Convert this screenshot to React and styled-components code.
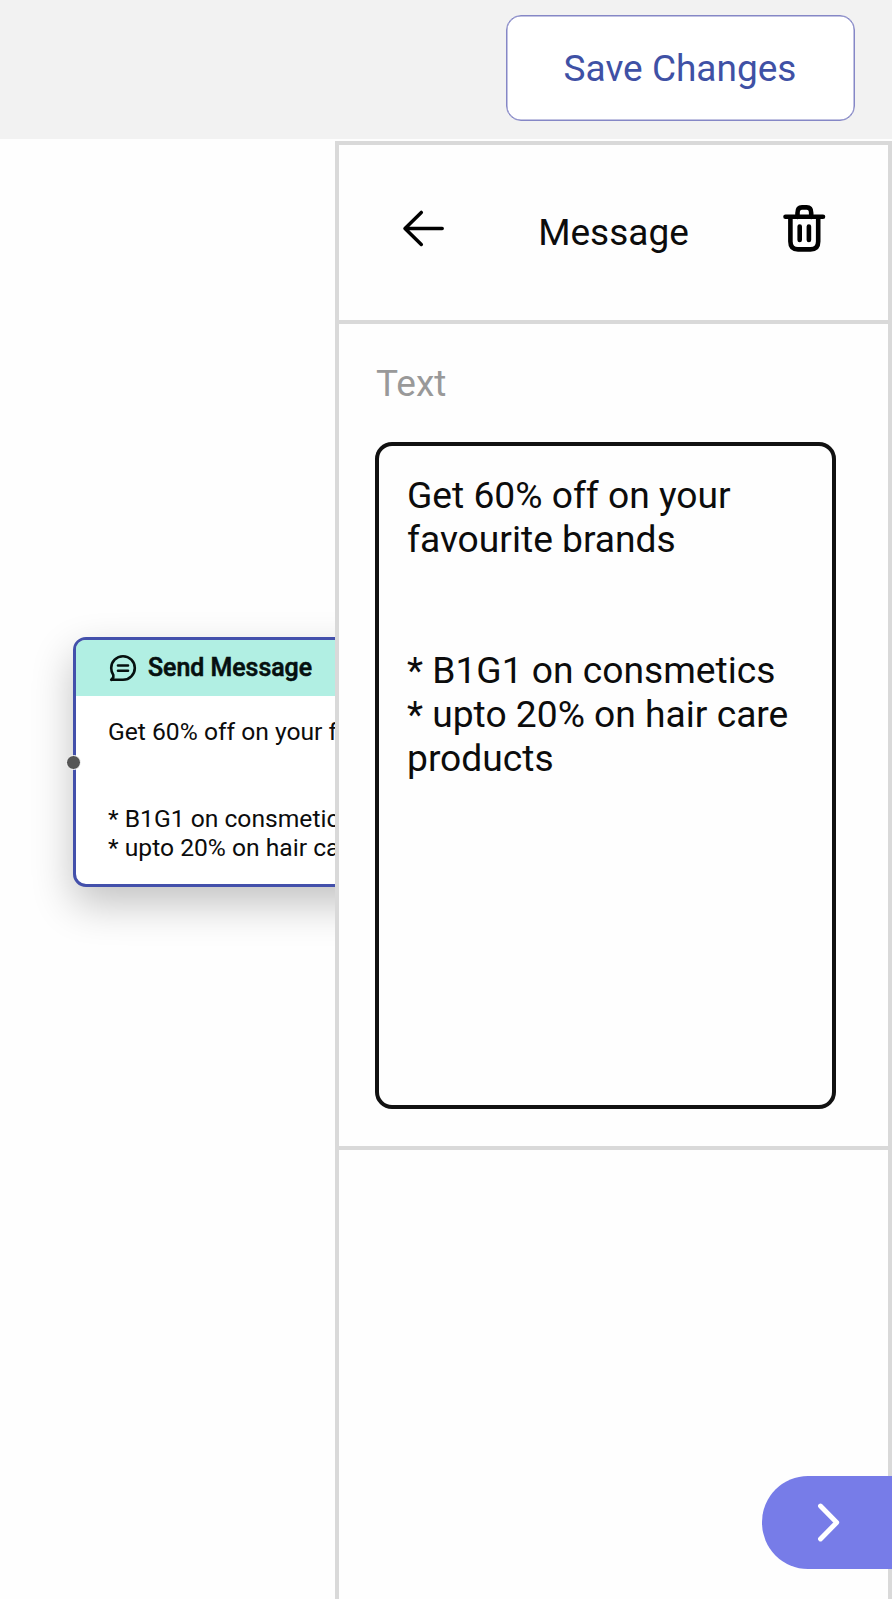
import React from "react";
import styled, { createGlobalStyle } from "styled-components";

const GlobalStyle = createGlobalStyle`
  *, *::before, *::after { box-sizing: border-box; }
  body { margin: 0; background: #fefefe; font-family: Roboto, sans-serif; color: #0c0c0c; overflow: hidden; }
  button { font: inherit; padding: 0; cursor: pointer; }
`;

const line = "#d9d9d9";

const Page = styled.div`
  display: flex;
  flex-direction: column;
  height: 1599px;
  width: 892px;
  overflow: hidden;
  position: relative;
`;

const TopBar = styled.header`
  display: flex;
  justify-content: flex-end;
  flex: none;
  height: 139px;
  padding: 15px 37px 0 0;
  background: #f2f2f2;
`;

const SaveButton = styled.button`
  width: 349px;
  height: 106px;
  padding: 1px 1px 0 0;
  border: 1px solid #8587c6;
  border-radius: 15px;
  box-shadow: inset 0 0 0 0.5px #8587c6;
  background: #fff;
  color: #3f51a5;
  font-size: 37px;
`;

const Workspace = styled.main`
  display: flex;
  flex: 1;
  min-height: 0;
`;

const Canvas = styled.section`
  position: relative;
  flex: 1;
  overflow: hidden;
`;

const Node = styled.article`
  position: absolute;
  left: 73px;
  top: 498px;
  width: 520px;
  height: 250px;
  border: 3px solid #4350ab;
  border-radius: 13px;
  background: #fff;
  box-shadow: 0 17px 42px rgba(0, 0, 0, 0.24);
`;

const NodeHeader = styled.header`
  display: flex;
  align-items: center;
  gap: 11px;
  height: 56px;
  padding-left: 33px;
  border-radius: 9px 9px 0 0;
  background: #b1efe3;
  color: #06100f;
`;

const NodeTitle = styled.h2`
  margin: 0;
  font-size: 24.9px;
  line-height: 28px;
  font-weight: 500;
  -webkit-text-stroke: 0.6px currentColor;
`;

const NodeText = styled.p`
  margin: 0;
  padding: 22px 0 0 32px;
  font-size: 24.65px;
  line-height: 28.9px;
  white-space: pre;
`;

const Handle = styled.span`
  position: absolute;
  left: -10.5px;
  top: 114.5px;
  width: 15px;
  height: 15px;
  border: 1px solid #fff;
  border-radius: 50%;
  background: #555;
`;

const Panel = styled.aside`
  flex: none;
  width: 557px;
  margin-top: 2px;
  border: 4px solid ${line};
  border-bottom: 0;
  background: #fefefe;
`;

const PanelHeader = styled.header`
  display: flex;
  justify-content: space-between;
  height: 179px;
  padding: 58px 62px 0 62px;
  border-bottom: 4px solid ${line};
`;

const IconButton = styled.button`
  display: block;
  width: 44px;
  height: 52px;
  border: 0;
  background: none;
  color: #000;
`;

const PanelTitle = styled.h1`
  margin: 8px 0 0;
  font-size: 37px;
  line-height: 44px;
  font-weight: 400;
`;

const Field = styled.section`
  height: 826px;
  padding: 38px 52px 0 36px;
  border-bottom: 4px solid ${line};
`;

const Label = styled.label`
  display: block;
  height: 80px;
  padding-left: 1px;
  color: #999;
  font-size: 37px;
  line-height: 44px;
`;

const TextArea = styled.textarea`
  display: block;
  width: 461px;
  height: 667px;
  padding: 28px;
  border: 4px solid #111;
  border-radius: 17px;
  outline: 0;
  resize: none;
  overflow: hidden;
  background: #fefefe;
  color: #0c0c0c;
  font-family: inherit;
  font-size: 37.2px;
  line-height: 43.8px;
`;

const NextTab = styled.button`
  position: absolute;
  right: 0;
  top: 1476px;
  width: 130px;
  height: 93px;
  border: 0;
  border-radius: 46px 0 0 46px;
  background: #777ce8;
`;

const Svg = styled.svg`
  display: block;
  fill: none;
  stroke: currentColor;
  stroke-linecap: round;
  stroke-linejoin: round;
`;

const ArrowIcon = () => (
  <Svg width="44" height="52" viewBox="0 0 44 52" strokeWidth="3.5">
    <path d="M41.2 25.4H4M20.3 9.4L4 25.4L20.3 41.4" />
  </Svg>
);

const TrashIcon = () => (
  <Svg width="44" height="52" viewBox="0 0 44 52" strokeWidth="4.6">
    <path d="M3.5 13.8H41M8.4 14V38.5Q8.4 46.4 16 46.4H28.5Q36.2 46.4 36.2 38.5V14M15.5 14V10Q15.5 4.4 20 4.4H24.7Q29.2 4.4 29.2 10V14M17.7 23.5V37M26.9 23.5V37" />
  </Svg>
);

const ChatIcon = () => (
  <Svg width="28" height="28" viewBox="0 0 28 28" strokeWidth="2.6">
    <path d="M2.2 25.8H14A11.8 11.8 0 1 0 2.2 14Q2.2 18 4.3 21V23.5L2.2 25.8M9 11.5H19M9 16.8H19" />
  </Svg>
);

const ChevronIcon = () => (
  <Svg width="130" height="93" viewBox="0 0 130 93" strokeWidth="4.9" color="#fff">
    <path d="M58.5 30L74.7 46.5L58.5 63" />
  </Svg>
);

const message =
  "Get 60% off on your favourite brands\n\n\n* B1G1 on consmetics\n* upto 20% on hair care products";

export default function App() {
  return (
    <Page>
      <GlobalStyle />
      <TopBar>
        <SaveButton>Save Changes</SaveButton>
      </TopBar>
      <Workspace>
        <Canvas>
          <Node>
            <NodeHeader>
              <ChatIcon />
              <NodeTitle>Send Message</NodeTitle>
            </NodeHeader>
            <NodeText>{message}</NodeText>
            <Handle />
          </Node>
        </Canvas>
        <Panel>
          <PanelHeader>
            <IconButton aria-label="Back"><ArrowIcon /></IconButton>
            <PanelTitle>Message</PanelTitle>
            <IconButton aria-label="Delete"><TrashIcon /></IconButton>
          </PanelHeader>
          <Field>
            <Label htmlFor="message-text">Text</Label>
            <TextArea id="message-text" defaultValue={message} spellCheck={false} />
          </Field>
        </Panel>
      </Workspace>
      <NextTab aria-label="Next"><ChevronIcon /></NextTab>
    </Page>
  );
}
